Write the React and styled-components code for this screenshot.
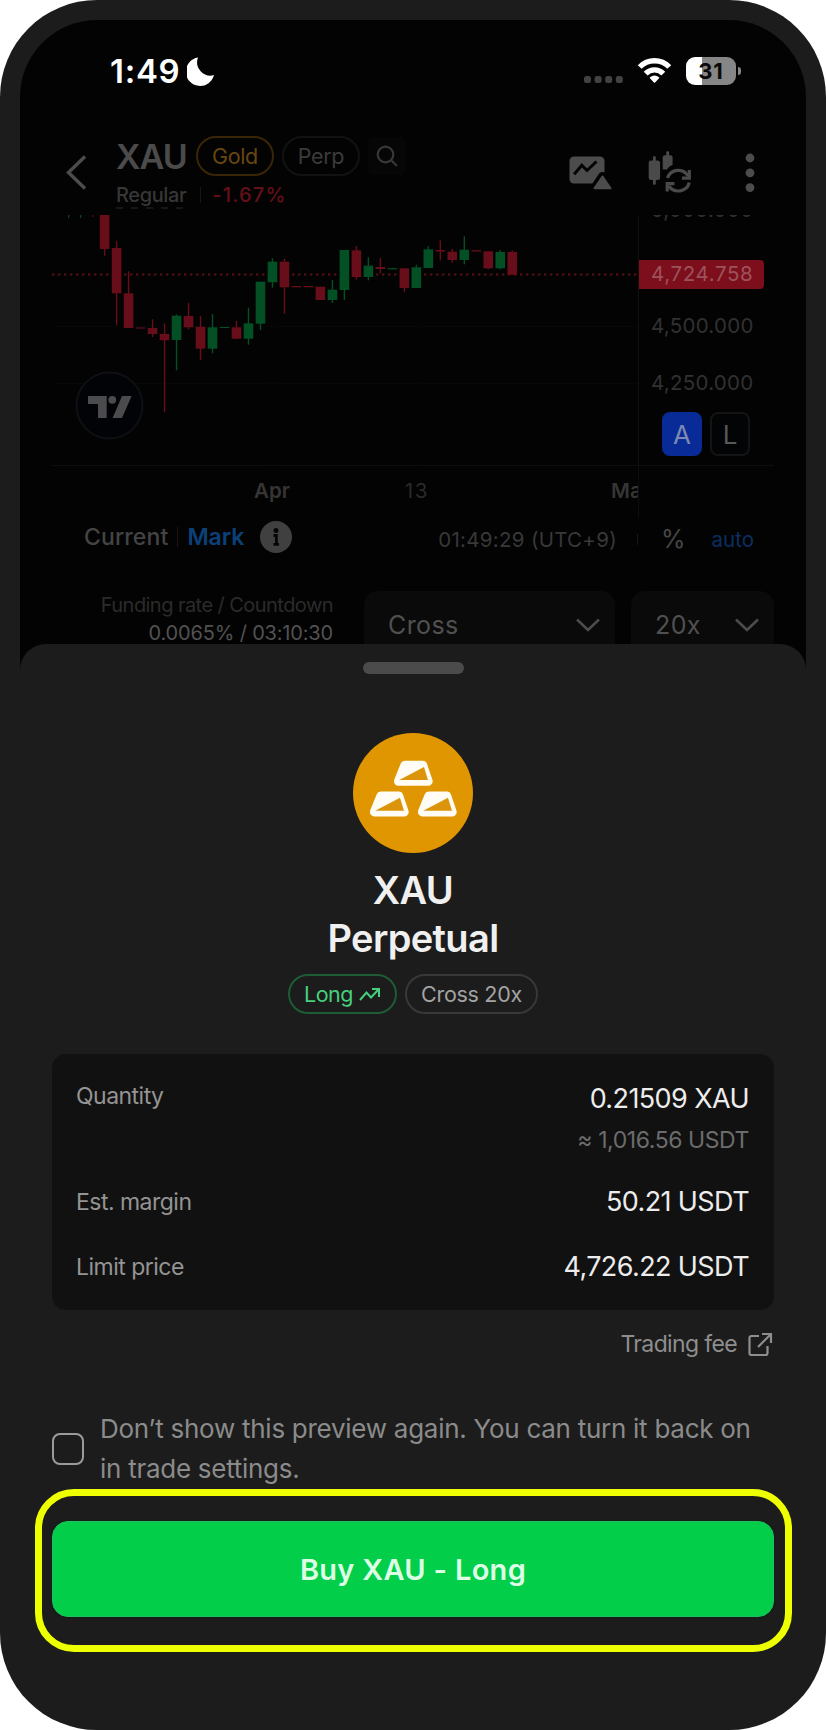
import React, { useState } from "react";
import styled, { createGlobalStyle, css } from "styled-components";

const GlobalStyle = createGlobalStyle`
  * {
    box-sizing: border-box;
  }
  body {
    margin: 0;
    background: #fff;
    font-family: Inter, "Liberation Sans", sans-serif;
  }
  svg {
    display: block;
    flex-shrink: 0;
  }
`;

const Phone = styled.div`
  width: 826px;
  height: 1730px;
  border-radius: 97px;
  background: #1c1c1c;
  padding: 20px;
`;

const Screen = styled.div`
  height: 100%;
  border-radius: 77px;
  background: linear-gradient(#030303 50%, #1c1c1c 50%);
  overflow: hidden;
  white-space: nowrap;
`;

const Backdrop = styled.div`
  height: 624px;
  overflow: hidden;
`;

/* status bar */

const StatusBar = styled.div`
  display: flex;
  align-items: center;
  height: 102px;
  padding: 0 65px 0 90px;
`;

const Clock = styled.span`
  font-size: 33px;
  font-weight: 600;
  letter-spacing: 0.7px;
  color: #fff;
  margin-right: 7px;
`;

const StatusIcons = styled.div`
  display: flex;
  align-items: center;
  gap: 14px;
  margin-left: auto;
`;

const Battery = styled.div`
  display: flex;
  align-items: center;
  gap: 2px;

  &::after {
    content: "";
    width: 3px;
    height: 8px;
    border-radius: 0 4px 4px 0;
    background: #868686;
  }
`;

const BatteryLevel = styled.div`
  width: 50px;
  height: 28px;
  border-radius: 9px;
  background: linear-gradient(90deg, #fff 31%, #868686 31%);
  font-size: 22px;
  font-weight: 700;
  line-height: 28px;
  text-align: center;
  letter-spacing: 0.8px;
  color: #0a0a0a;
`;

/* market header */

const Header = styled.div`
  display: flex;
  height: 93px;
  padding: 0 51px 0 46px;
`;

const HeaderActions = styled.div`
  display: flex;
  align-items: center;
  gap: 36px;
  padding-top: 8px;
`;

const ChartActions = styled(HeaderActions)`
  margin: 0 53px 0 auto;
`;

const Market = styled.div`
  padding: 14px 0 0 29px;
`;

const MarketRow = styled.div`
  display: flex;
  align-items: center;
  height: ${(props) => props.height}px;
`;

const Ticker = styled.span`
  font-size: 34px;
  font-weight: 600;
  letter-spacing: -0.9px;
  color: #4b4b4b;
  margin-right: 9px;
`;

const Tag = styled.span`
  width: 78px;
  height: 40px;
  border: 2px solid ${(props) => (props.gold ? "#3a2606" : "#121212")};
  border-radius: 20px;
  font-size: 21.5px;
  line-height: 36px;
  text-align: center;
  letter-spacing: -0.4px;
  color: ${(props) => (props.gold ? "#684710" : "#3b3b3b")};
  margin-right: 8px;
`;

const SearchBox = styled.div`
  display: flex;
  align-items: center;
  justify-content: center;
  width: 38px;
  height: 38px;
  border-radius: 6px;
  background: #060606;
`;

const Session = styled.span`
  height: 26px;
  margin-top: 2px;
  font-size: 20px;
  font-weight: 500;
  line-height: 24px;
  letter-spacing: -0.38px;
  color: #373737;
  background: repeating-linear-gradient(
      90deg,
      #171717 0 7px,
      transparent 7px 15px
    )
    bottom / 100% 2px no-repeat;
`;

const Divider = styled.span`
  width: 1px;
  height: ${(props) => props.height}px;
  margin: ${(props) => props.space};
  background: ${(props) => props.color || "#161616"};
`;

const Change = styled.span`
  font-size: 20px;
  font-weight: 500;
  letter-spacing: 1.2px;
  color: #651019;
`;

/* chart */

const ChartGrid = styled.div`
  display: grid;
  grid-template-columns: 586px 136px;
  grid-template-rows: 251px 52px;
  margin: 0 32px;
`;

const Plot = styled.div`
  border-bottom: 1px solid #0e0e0e;
`;

const PriceAxis = styled.div`
  border-left: 1px solid #101010;
  border-bottom: 1px solid #0e0e0e;
  overflow: hidden;
`;

const Price = styled.div`
  height: 20px;
  margin-top: ${(props) => props.top}px;
  padding-left: 12px;
  font-size: 20.5px;
  line-height: 20px;
  letter-spacing: 0.27px;
  color: #313131;

  ${(props) =>
    props.last &&
    css`
      width: 125px;
      height: 29px;
      border-radius: 0 4px 4px 0;
      line-height: 28px;
      letter-spacing: 0.63px;
      background: #7d0e1b;
      color: #9c525a;
    `}
`;

const ScaleButtons = styled.div`
  display: flex;
  gap: 8px;
  padding: 19px 0 0 23px;
`;

const ScaleButton = styled.button`
  width: 40px;
  height: 44px;
  padding: 0;
  border: 2px solid ${(props) => (props.active ? "#082b97" : "#141414")};
  border-radius: 8px;
  background: ${(props) => (props.active ? "#082b97" : "#020406")};
  font-family: inherit;
  font-size: 26px;
  color: ${(props) => (props.active ? "#7d88b3" : "#585858")};
`;

const Dates = styled.div`
  display: flex;
  overflow: hidden;
  line-height: 49px;
  font-size: 20.5px;
`;

const DateLabel = styled.span`
  margin-left: ${(props) => props.left}px;
  font-weight: ${(props) => (props.month ? 600 : 400)};
  letter-spacing: ${(props) => (props.month ? 0 : 1.6)}px;
  color: ${(props) => (props.month ? "#353535" : "#2a2a2a")};
`;

const AxisFoot = styled.div`
  border-left: 1px solid #0d0d0d;
`;

const PriceModes = styled.div`
  display: flex;
  align-items: center;
  height: 37px;
  padding: 0 52px 0 64px;
`;

const Mode = styled.span`
  font-size: 23px;
  font-weight: ${(props) => (props.active ? 600 : 500)};
  letter-spacing: ${(props) => (props.active ? 0 : 0.12)}px;
  color: ${(props) => (props.active ? "#0b4079" : "#444")};
`;

const InfoButton = styled.button`
  margin-left: 16px;
  padding: 0;
  border: 0;
  background: none;
`;

const ScaleInfo = styled.div`
  display: flex;
  align-items: center;
  margin-left: auto;
  padding-top: 5px;
  font-size: 20.5px;
  color: #383838;
`;

const UtcTime = styled.span`
  letter-spacing: 0.29px;
`;

const Percent = styled.span`
  font-size: 25px;
  line-height: 25px;
  color: #464646;
`;

const Auto = styled.span`
  margin-left: 26px;
  color: #0b2e61;
`;

/* order form */

const OrderRow = styled.div`
  display: flex;
  gap: 16px;
  padding: 36px 32px 0;
`;

const Funding = styled.div`
  width: 281px;
  margin-right: 15px;
  flex-shrink: 0;
  font-size: 20px;
  line-height: 28px;
  text-align: right;
`;

const FundingLabel = styled.div`
  letter-spacing: -0.55px;
  color: #2b2b2b;
`;

const FundingValue = styled.div`
  letter-spacing: -0.17px;
  color: #525252;
`;

const Select = styled.div`
  display: flex;
  align-items: center;
  justify-content: space-between;
  width: ${(props) => props.width}px;
  height: 67px;
  padding: 0 15px 0 24px;
  border-radius: 14px;
  background: #0a0a0a;
  flex-shrink: 0;
  font-size: 25px;
  letter-spacing: 0.4px;
  color: #505050;
`;

/* preview sheet */

const Sheet = styled.div`
  display: flex;
  flex-direction: column;
  align-items: center;
  height: 1066px;
  padding: 18px 32px 0;
  border-radius: 26px 26px 0 0;
  background: #1c1c1c;
`;

const Handle = styled.div`
  width: 101px;
  height: 12px;
  border-radius: 6px;
  margin-bottom: 59px;
  background: #4b4b4b;
`;

const Title = styled.h1`
  margin: 13px 0 12px;
  font-size: 38px;
  font-weight: 600;
  line-height: 48px;
  letter-spacing: -0.65px;
  text-align: center;
  color: #f0f0f0;
`;

const Badges = styled.div`
  display: flex;
  gap: 8px;
  margin-bottom: 40px;
`;

const Badge = styled.span`
  display: flex;
  align-items: center;
  justify-content: center;
  gap: 6px;
  width: ${(props) => (props.long ? 109 : 133)}px;
  height: 40px;
  border: 2px solid ${(props) => (props.long ? "#1d5c34" : "#383838")};
  border-radius: 20px;
  font-size: 21.5px;
  letter-spacing: ${(props) => (props.long ? -0.5 : -0.3)}px;
  color: ${(props) => (props.long ? "#46d07c" : "#a3a3a3")};
`;

const Card = styled.dl`
  width: 100%;
  height: 256px;
  margin: 0;
  padding: 25px 25px 0 24px;
  border-radius: 14px;
  background: #111;
`;

const Row = styled.div`
  display: flex;
  justify-content: space-between;
  align-items: ${(props) => (props.tall ? "flex-start" : "center")};
  height: ${(props) => (props.tall ? 90 : 65)}px;
`;

const Label = styled.dt`
  font-size: 23px;
  line-height: 34px;
  letter-spacing: -0.52px;
  color: #949494;
`;

const Value = styled.dd`
  margin: 0;
  font-size: 27px;
  line-height: 40px;
  letter-spacing: -0.6px;
  text-align: right;
  color: #ececec;
`;

const Approx = styled.div`
  font-size: 23px;
  line-height: 43px;
  letter-spacing: -0.43px;
  color: #6c6c6c;
`;

const FeeLink = styled.a`
  display: flex;
  align-items: center;
  align-self: flex-end;
  gap: 10px;
  height: 68px;
  font-size: 23px;
  letter-spacing: -0.64px;
  color: #8e8e8e;
`;

const OptOut = styled.label`
  display: flex;
  align-items: center;
  gap: 16px;
  width: 100%;
  margin-top: 31px;
  font-size: 26px;
  line-height: 40px;
  letter-spacing: -0.27px;
  color: #8b8b8b;
`;

const Checkbox = styled.input`
  appearance: none;
  width: 32px;
  height: 32px;
  margin: 0;
  border: 2px solid #9b9b9b;
  border-radius: 8px;
  flex-shrink: 0;

  &:checked {
    background: #9b9b9b;
  }
`;

const Highlight = styled.div`
  width: 757px;
  height: 163px;
  padding: 25px 10.5px 0;
  border: 7px solid #eeff00;
  border-radius: 39px;
  flex-shrink: 0;
`;

const BuyButton = styled.button`
  width: 100%;
  height: 96px;
  padding: 0;
  border: 1px solid #1fc061;
  border-radius: 16px;
  background: #02ce49;
  box-shadow: 0 0 3px #06250f;
  font-family: inherit;
  font-size: 29px;
  font-weight: 600;
  letter-spacing: 0.3px;
  color: #dcffe6;
`;

// [body top, body bottom, wick top, wick bottom, rising], in plot pixels
const candles = [
  [214, 249, 214, 255.7],
  [248, 293.3, 241, 325],
  [293.3, 328, 271.3, 328],
  [327.5, 328.5, 327.5, 328.5],
  [328, 334, 319.3, 337],
  [334, 340.3, 323.3, 412.3],
  [315.7, 340, 314.5, 370.3, true],
  [316, 327.3, 303, 329.3],
  [326.7, 348.7, 316, 360],
  [327.3, 348.7, 314, 353.3, true],
  [327, 328, 327, 328, true],
  [327.3, 338.7, 321, 339],
  [323.3, 338.7, 307.7, 344.7, true],
  [281.7, 323.7, 281.7, 330, true],
  [261.7, 282.3, 258.3, 287.7, true],
  [261.7, 287.3, 258.7, 313.7],
  [286, 287.3, 286, 287],
  [286, 287.3, 286, 287],
  [286.7, 300, 286.7, 300],
  [289.7, 300, 280, 303, true],
  [250, 290, 250, 300, true],
  [250.3, 277, 246, 279.7],
  [265.7, 277, 257.3, 280.3, true],
  [267, 269, 258, 273.3],
  [268.2, 269.4, 268, 269, true],
  [268.3, 288, 268.3, 292.3],
  [267.3, 288, 264.7, 288, true],
  [249.3, 268, 246.3, 268, true],
  [250, 251.5, 240.3, 260.3],
  [251.7, 260, 249, 262.7],
  [249.7, 260, 236.3, 264.3, true],
  [250.2, 251.5, 250, 251],
  [251.3, 268.3, 251.3, 269.3],
  [252, 268.3, 250, 269.3, true],
  [252, 274.7, 250.3, 274.7],
];

const CandleChart = () => (
  <svg width="586" height="250" viewBox="52 215 586 250">
    <path
      d="M52 326.5H639M52 383.5H639M272 215V465M418 215V465"
      stroke="#070707"
      fill="none"
    />
    <path
      d="M52 274.5H639"
      stroke="#5c0f16"
      strokeWidth="2"
      strokeDasharray="2.4 3.6"
    />
    <path d="M68.7 215v3M80.7 215v3" stroke="#0d3a33" strokeWidth="1.4" />
    <path d="M92.7 215v2" stroke="#4d0c12" strokeWidth="1.4" />
    {candles.map(([top, bottom, high, low, up], i) => {
      const x = 104.6 + i * 11.99;
      const color = up ? "#045025" : "#680e1a";
      return (
        <g key={i} fill={color}>
          <rect x={x - 0.7} y={high} width="1.4" height={low - high} />
          <rect x={x - 4.8} y={top} width="9.6" height={bottom - top} />
        </g>
      );
    })}
    <circle
      cx="109.5"
      cy="405.5"
      r="33"
      fill="#020307"
      stroke="#0f1013"
      strokeWidth="2"
    />
    <g fill="#4b4b4d">
      <path d="M88 396h18.7v22H98v-14H88z" />
      <circle cx="112.3" cy="399.8" r="3.9" />
      <path d="M122 396h9.6l-9.6 22h-9.4z" />
    </g>
  </svg>
);

const MoonIcon = () => (
  <svg width="28" height="29" viewBox="187 56.5 28 29" fill="#fff">
    <path d="M198 57A14.3 14.3 0 1 0 214 74.6A13.4 13.4 0 0 1 198 57z" />
  </svg>
);

const SignalDots = () => (
  <svg width="39" height="28" viewBox="584 57 39 28" fill="#424242">
    <rect x="584" y="76" width="7" height="7" rx="2.5" />
    <rect x="594.6" y="76" width="7" height="7" rx="2.5" />
    <rect x="605.2" y="76" width="7" height="7" rx="2.5" />
    <rect x="615.8" y="76" width="7" height="7" rx="2.5" />
  </svg>
);

const WifiIcon = () => (
  <svg
    width="35"
    height="28"
    viewBox="636.5 57 35 28"
    fill="none"
    stroke="#fff"
    strokeWidth="5.4"
  >
    <path d="M639.2 67A20.5 20.5 0 0 1 668.8 67" />
    <path d="M645.2 73.6A12.3 12.3 0 0 1 662.8 73.6" />
    <path
      d="M650 77.8A6.6 6.6 0 0 1 658 77.8L654 82z"
      fill="#fff"
      strokeWidth="1.6"
      strokeLinejoin="round"
    />
  </svg>
);

const BackIcon = () => (
  <svg width="21" height="35" viewBox="0 0 21 35" fill="none">
    <path d="M19 1.5L2.5 17.5L19 33.5" stroke="#4c4c4c" strokeWidth="3.4" />
  </svg>
);

const SearchIcon = () => (
  <svg width="22" height="22" viewBox="0 0 22 22" fill="none">
    <g stroke="#383838" strokeWidth="2.2">
      <circle cx="9.5" cy="9.5" r="7.8" />
      <path d="M15 15l6 6" />
    </g>
  </svg>
);

const ChartAlertIcon = () => (
  <svg width="43" height="34" viewBox="568.5 156.5 43 34">
    <rect x="569" y="157" width="35" height="27" rx="4.5" fill="#4c4c4c" />
    <path
      d="M573.7 174.7L581.3 165.7L586.5 171L596 162"
      fill="none"
      stroke="#030303"
      strokeWidth="3"
    />
    <path
      d="M602 177L610 189H594z"
      fill="#030303"
      stroke="#030303"
      strokeWidth="9"
      strokeLinejoin="round"
    />
    <path
      d="M602 177L610 188.8H594z"
      fill="#4c4c4c"
      stroke="#4c4c4c"
      strokeWidth="2"
      strokeLinejoin="round"
    />
  </svg>
);

const CandleSwitchIcon = () => (
  <svg width="44" height="43" viewBox="648 151.5 44 43">
    <g fill="#4a4a4a">
      <rect x="648.7" y="161" width="11.4" height="19.5" rx="2.5" />
      <rect x="653" y="156.7" width="2.8" height="28.6" rx="1" />
      <path d="M662.7 158q0-2.3 2.3-2.3h5.3q2.3 0 2.3 2.3v7.5q-4 1-5.5 4.5h-4.4z" />
      <rect x="666.3" y="151.7" width="2.8" height="10" rx="1" />
    </g>
    <g fill="none" stroke="#4a4a4a" strokeWidth="3.2">
      <path d="M667.5 178.500A11.300 11.300 0 0 1 688 176.500" />
      <path d="M689.300 170.500V178.600H682" />
      <path d="M689.300 183A11.300 11.300 0 0 1 669 186.500" />
      <path d="M667.200 192V184.200H674.500" />
    </g>
  </svg>
);

const MoreIcon = () => (
  <svg width="10" height="40" viewBox="0 0 10 40" fill="#4c4c4c">
    <circle cx="5" cy="5" r="4.4" />
    <circle cx="5" cy="19.8" r="4.4" />
    <circle cx="5" cy="34.6" r="4.4" />
  </svg>
);

const InfoIcon = () => (
  <svg width="32" height="32" viewBox="0 0 32 32">
    <circle cx="16" cy="16" r="16" fill="#404040" />
    <circle cx="16" cy="9.5" r="2.5" fill="#050505" />
    <path
      d="M13.5 14.5H16.4V24M13.5 23.4H19"
      fill="none"
      stroke="#050505"
      strokeWidth="2.8"
    />
  </svg>
);

const ChevronDown = () => (
  <svg width="24" height="14" viewBox="0 0 24 14" fill="none">
    <path d="M1 1.5L12 12L23 1.5" stroke="#4c4c4c" strokeWidth="2.6" />
  </svg>
);

const GoldCoin = () => (
  <svg width="120" height="120" viewBox="0 0 120 120">
    <circle cx="60" cy="60" r="60" fill="#e09600" />
    {[
      [60.3, 40.3],
      [36.3, 71],
      [84.3, 71],
    ].map(([x, y]) => (
      <g key={x} transform={`translate(${x} ${y})`}>
        <path
          d="M-8.5 -8.2H9.5L15 8H-15z"
          fill="#fffdf5"
          stroke="#fffdf5"
          strokeWidth="8.8"
          strokeLinejoin="round"
        />
        <path d="M-14 6.7L10.7 -6.3L14.7 6.7z" fill="#dc940a" />
      </g>
    ))}
  </svg>
);

const TrendIcon = () => (
  <svg width="22" height="15" viewBox="0 0 22 15" fill="none">
    <g stroke="#46d07c" strokeWidth="2">
      <path d="M1 13L7.5 5.5L12 10.5L19.5 2.5" />
      <path d="M13 2H20V10" />
    </g>
  </svg>
);

const ExternalIcon = () => (
  <svg width="27" height="25" viewBox="0 0 27 25" fill="none">
    <g stroke="#8e8e8e" strokeWidth="2.2">
      <path d="M12 4H4.500Q2.500 4 2.500 6V21Q2.500 23 4.500 23H18.500Q20.500 23 20.500 21V14" />
      <path d="M11 15L23.500 2.500M15 2H24V11" />
    </g>
  </svg>
);

const TradeScreen = () => (
  <Backdrop>
    <StatusBar>
      <Clock>1:49</Clock>
      <MoonIcon />
      <StatusIcons>
        <SignalDots />
        <WifiIcon />
        <Battery>
          <BatteryLevel>31</BatteryLevel>
        </Battery>
      </StatusIcons>
    </StatusBar>

    <Header>
      <HeaderActions>
        <BackIcon />
      </HeaderActions>
      <Market>
        <MarketRow height={40}>
          <Ticker>XAU</Ticker>
          <Tag gold>Gold</Tag>
          <Tag>Perp</Tag>
          <SearchBox>
            <SearchIcon />
          </SearchBox>
        </MarketRow>
        <MarketRow height={38}>
          <Session>Regular</Session>
          <Divider height={16} space="0 11px 0 14px" />
          <Change>-1.67%</Change>
        </MarketRow>
      </Market>
      <ChartActions>
        <ChartAlertIcon />
        <CandleSwitchIcon />
      </ChartActions>
      <HeaderActions>
        <MoreIcon />
      </HeaderActions>
    </Header>

    <ChartGrid>
      <Plot>
        <CandleChart />
      </Plot>
      <PriceAxis>
        <Price top={-15}>5,000.000</Price>
        <Price top={40} last>
          4,724.758
        </Price>
        <Price top={27}>4,500.000</Price>
        <Price top={37}>4,250.000</Price>
        <ScaleButtons>
          <ScaleButton active>A</ScaleButton>
          <ScaleButton>L</ScaleButton>
        </ScaleButtons>
      </PriceAxis>
      <Dates>
        <DateLabel month left={202}>
          Apr
        </DateLabel>
        <DateLabel left={115}>13</DateLabel>
        <DateLabel month left={182}>
          May
        </DateLabel>
      </Dates>
      <AxisFoot />
    </ChartGrid>

    <PriceModes>
      <Mode>Current</Mode>
      <Divider height={20} space="0 9px" color="#241010" />
      <Mode active>Mark</Mode>
      <InfoButton type="button">
        <InfoIcon />
      </InfoButton>
      <ScaleInfo>
        <UtcTime>01:49:29 (UTC+9)</UtcTime>
        <Divider height={11} space="0 23px 0 20px" />
        <Percent>%</Percent>
        <Auto>auto</Auto>
      </ScaleInfo>
    </PriceModes>

    <OrderRow>
      <Funding>
        <FundingLabel>Funding rate / Countdown</FundingLabel>
        <FundingValue>0.0065% / 03:10:30</FundingValue>
      </Funding>
      <Select width={251}>
        Cross
        <ChevronDown />
      </Select>
      <Select width={143}>
        20x
        <ChevronDown />
      </Select>
    </OrderRow>
  </Backdrop>
);

const OrderPreview = () => {
  const [hidePreview, setHidePreview] = useState(false);
  return (
    <Sheet>
      <Handle />
      <GoldCoin />
      <Title>
        XAU
        <br />
        Perpetual
      </Title>
      <Badges>
        <Badge long>
          Long
          <TrendIcon />
        </Badge>
        <Badge>Cross 20x</Badge>
      </Badges>

      <Card>
        <Row tall>
          <Label>Quantity</Label>
          <Value>
            0.21509 XAU
            <Approx>≈ 1,016.56 USDT</Approx>
          </Value>
        </Row>
        <Row>
          <Label>Est. margin</Label>
          <Value>50.21 USDT</Value>
        </Row>
        <Row>
          <Label>Limit price</Label>
          <Value>4,726.22 USDT</Value>
        </Row>
      </Card>

      <FeeLink>
        Trading fee
        <ExternalIcon />
      </FeeLink>

      <OptOut>
        <Checkbox
          type="checkbox"
          checked={hidePreview}
          onChange={(e) => setHidePreview(e.target.checked)}
        />
        <span>
          Don’t show this preview again. You can turn it back on
          <br />
          in trade settings.
        </span>
      </OptOut>

      <Highlight>
        <BuyButton type="button">Buy XAU - Long</BuyButton>
      </Highlight>
    </Sheet>
  );
};

export default function App() {
  return (
    <Phone>
      <GlobalStyle />
      <Screen>
        <TradeScreen />
        <OrderPreview />
      </Screen>
    </Phone>
  );
}
